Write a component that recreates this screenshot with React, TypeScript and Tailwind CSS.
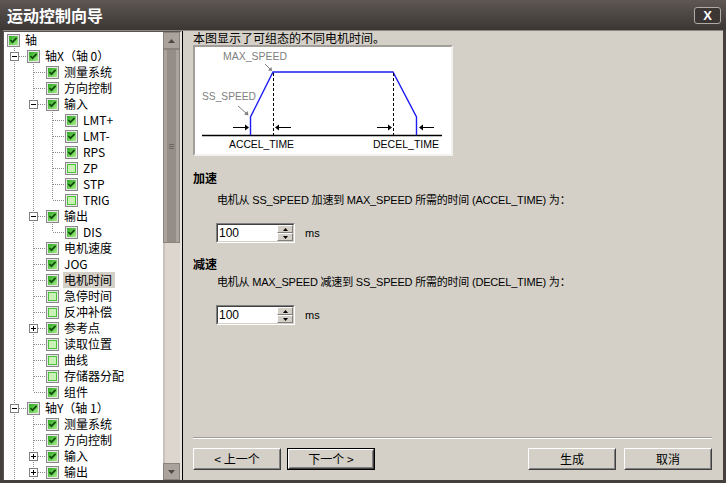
import type { ReactNode } from 'react';

type Row = {
  d: number;
  label: string;
  on: boolean;
  exp?: '-' | '+';
  last?: boolean;
  sel?: boolean;
};

const rows: Row[] = [
  { d: 0, label: '轴', on: true },
  { d: 1, label: '轴X（轴 0）', on: true, exp: '-' },
  { d: 2, label: '测量系统', on: true },
  { d: 2, label: '方向控制', on: true },
  { d: 2, label: '输入', on: true, exp: '-' },
  { d: 3, label: 'LMT+', on: true },
  { d: 3, label: 'LMT-', on: true },
  { d: 3, label: 'RPS', on: true },
  { d: 3, label: 'ZP', on: false },
  { d: 3, label: 'STP', on: true },
  { d: 3, label: 'TRIG', on: false, last: true },
  { d: 2, label: '输出', on: true, exp: '-' },
  { d: 3, label: 'DIS', on: true, last: true },
  { d: 2, label: '电机速度', on: true },
  { d: 2, label: 'JOG', on: true },
  { d: 2, label: '电机时间', on: true, sel: true },
  { d: 2, label: '急停时间', on: false },
  { d: 2, label: '反冲补偿', on: false },
  { d: 2, label: '参考点', on: true, exp: '+' },
  { d: 2, label: '读取位置', on: false },
  { d: 2, label: '曲线', on: false },
  { d: 2, label: '存储器分配', on: false },
  { d: 2, label: '组件', on: true, last: true },
  { d: 1, label: '轴Y（轴 1）', on: true, exp: '-' },
  { d: 2, label: '测量系统', on: true },
  { d: 2, label: '方向控制', on: true },
  { d: 2, label: '输入', on: true, exp: '+' },
  { d: 2, label: '输出', on: true, exp: '+' },
];

const DOT = '#8c8c8c';

const Guide = () => (
  <svg width="19" height="16" className="shrink-0">
    <line x1="10.5" y1="0" x2="10.5" y2="16" stroke={DOT} strokeDasharray="1 1" />
  </svg>
);

const Connector = ({ last, exp }: { last?: boolean; exp?: '-' | '+' }) => (
  <svg width="23" height="16" className="shrink-0">
    <line x1="10.5" y1="0" x2="10.5" y2={last ? 8 : 16} stroke={DOT} strokeDasharray="1 1" />
    <line x1="11" y1="8.5" x2="23" y2="8.5" stroke={DOT} strokeDasharray="1 1" />
    {exp && (
      <g>
        <rect x="6.5" y="4.5" width="8" height="8" fill="white" stroke="#808080" />
        <line x1="8" y1="8.5" x2="13" y2="8.5" stroke="black" />
        {exp === '+' && <line x1="10.5" y1="6" x2="10.5" y2="11" stroke="black" />}
      </g>
    )}
  </svg>
);

const Check = ({ on }: { on: boolean }) => (
  <svg width="13" height="13" className="shrink-0">
    <defs>
      <linearGradient id="chkg" x1="0" y1="0" x2="1" y2="1">
        <stop offset="0" stopColor="#2aa81e" />
        <stop offset="1" stopColor="#a6ee8a" />
      </linearGradient>
    </defs>
    <rect x="0.5" y="0.5" width="12" height="12" fill="#e8e8e8" stroke="#888888" />
    <rect x="2" y="2" width="9" height="9" fill={on ? 'url(#chkg)' : '#48c436'} />
    {on ? (
      <path d="M3.5 6 L5.5 8.2 L9.6 3.8" stroke="#0f4a08" strokeWidth="1.7" fill="none" />
    ) : (
      <rect x="3" y="3" width="7" height="7" fill="#c9f2b6" />
    )}
  </svg>
);

const TreeRow = ({ r }: { r: Row }) => (
  <div className="flex h-4 items-center">
    {r.d === 0 ? (
      <div className="w-[3px] shrink-0" />
    ) : (
      <>
        {Array.from({ length: r.d - 1 }).map((_, i) => (
          <Guide key={i} />
        ))}
        <Connector last={r.last} exp={r.exp} />
      </>
    )}
    <Check on={r.on} />
    <span
      className={`ml-[4px] whitespace-nowrap pl-[1px] pr-[3px] text-[12px] leading-4 text-black ${
        r.sel ? 'bg-[#d4d0c8]' : ''
      }`}
    >
      {r.label}
    </span>
  </div>
);

const Arrow = ({ dir }: { dir: 'up' | 'down' }) => (
  <svg width="7" height="4">
    <path d={dir === 'up' ? 'M0 4 L3.5 0 L7 4 Z' : 'M0 0 L3.5 4 L7 0 Z'} fill="#4e4844" />
  </svg>
);

const ScrollBtn = ({ dir }: { dir: 'up' | 'down' }) => (
  <div className="flex h-[17px] items-center justify-center border border-[#8a827c] bg-[#aaa29c]">
    <Arrow dir={dir} />
  </div>
);

const Scrollbar = () => (
  <div className="flex w-[17px] flex-col bg-[#ddd6cf]">
    <ScrollBtn dir="up" />
    <div className="flex h-[194px] border border-[#8a827c]">
      <div className="w-[3px] bg-[#aba39d]" />
      <div className="flex flex-1 items-center justify-center bg-[#958d87]">
        <div className="flex flex-col gap-[1px]">
          <div className="h-px w-[5px] bg-[#6e6762]" />
          <div className="h-px w-[5px] bg-[#6e6762]" />
          <div className="h-px w-[5px] bg-[#6e6762]" />
        </div>
      </div>
      <div className="w-[3px] bg-[#aba39d]" />
    </div>
    <div className="flex-1 border-l-2 border-[#c9c1bb]" />
    <ScrollBtn dir="down" />
  </div>
);

const Chart = () => (
  <div className="h-[111px] w-[260px] border-2 border-t-[#a29e9a] border-l-[#a29e9a] border-r-[#f3f1ee] border-b-[#f3f1ee] bg-white">
    <svg width="256" height="107" viewBox="2 2 256 107" fontFamily="Liberation Sans, sans-serif">
      <line x1="9" y1="90.5" x2="249" y2="90.5" stroke="black" strokeWidth="1.3" />
      <polyline
        points="57.5,90 57.5,72 80,27 200,27 223.5,72 223.5,90"
        fill="none"
        stroke="#1c1cf5"
        strokeWidth="1.4"
      />
      <line x1="80.5" y1="28" x2="80.5" y2="90" stroke="black" strokeDasharray="3 2" />
      <line x1="200.5" y1="28" x2="200.5" y2="90" stroke="black" strokeDasharray="3 2" />
      <g stroke="black" fill="black">
        <line x1="40" y1="82.5" x2="53" y2="82.5" />
        <path d="M52 79.5 L56 82.5 L52 85.5 Z" stroke="none" />
        <line x1="85" y1="82.5" x2="98" y2="82.5" />
        <path d="M86 79.5 L82 82.5 L86 85.5 Z" stroke="none" />
        <line x1="184" y1="82.5" x2="196" y2="82.5" />
        <path d="M195 79.5 L199 82.5 L195 85.5 Z" stroke="none" />
        <line x1="229" y1="82.5" x2="241" y2="82.5" />
        <path d="M230 79.5 L226 82.5 L230 85.5 Z" stroke="none" />
      </g>
      <g stroke="#808080" fill="#808080">
        <line x1="72" y1="19" x2="77" y2="24" />
        <path d="M75 25.5 L79 26 L78.5 22 Z" stroke="none" />
        <line x1="45" y1="61" x2="53" y2="68" />
        <path d="M51 69.5 L55.5 70.5 L54.5 66 Z" stroke="none" />
      </g>
      <text x="30" y="15" fontSize="11" fill="#808080" textLength="64" lengthAdjust="spacingAndGlyphs">
        MAX_SPEED
      </text>
      <text x="9" y="55" fontSize="11" fill="#808080" textLength="54" lengthAdjust="spacingAndGlyphs">
        SS_SPEED
      </text>
      <text x="36" y="103" fontSize="11" fill="black" textLength="65" lengthAdjust="spacingAndGlyphs">
        ACCEL_TIME
      </text>
      <text x="180" y="103" fontSize="11" fill="black" textLength="66" lengthAdjust="spacingAndGlyphs">
        DECEL_TIME
      </text>
    </svg>
  </div>
);

const SpinBtn = ({ dir }: { dir: 'up' | 'down' }) => (
  <div className="flex h-[8px] items-center justify-center border border-t-white border-l-white border-r-[#808080] border-b-[#808080] bg-[#d4d0c8]">
    <svg width="5" height="3">
      <path d={dir === 'up' ? 'M0 3 L2.5 0 L5 3 Z' : 'M0 0 L2.5 3 L5 0 Z'} fill="black" />
    </svg>
  </div>
);

const Spinner = () => (
  <div className="flex items-center pl-[23px]">
    <div className="flex h-[20px] w-[79px] border border-t-[#808080] border-l-[#808080] border-r-white border-b-white">
      <div className="flex flex-1 border border-t-[#404040] border-l-[#404040] border-r-[#d4d0c8] border-b-[#d4d0c8] bg-white">
        <span className="flex-1 pl-[1px] font-['Liberation_Sans',sans-serif] text-[12px] leading-[16px] text-black">
          100
        </span>
        <div className="flex w-[16px] flex-col">
          <SpinBtn dir="up" />
          <SpinBtn dir="down" />
        </div>
      </div>
    </div>
    <span className="ml-[10px] font-['Liberation_Sans',sans-serif] text-[11px] text-black">ms</span>
  </div>
);

const Btn = ({ children, def }: { children: ReactNode; def?: boolean }) => (
  <button className={`h-[22px] w-[88px] ${def ? 'border border-black' : ''}`}>
    <div className="h-full border border-t-white border-l-white border-r-[#404040] border-b-[#404040] bg-[#d4d0c8]">
      <div className="flex h-full items-center justify-center border border-t-[#d4d0c8] border-l-[#d4d0c8] border-r-[#808080] border-b-[#808080] text-[12px] text-black">
        {children}
      </div>
    </div>
  </button>
);

export default function App() {
  return (
    <div className="flex h-[483px] w-[726px] flex-col bg-[#45403d] font-['Noto_Sans_CJK_SC',sans-serif]">
      <div className="flex h-[30px] items-center justify-between bg-gradient-to-b from-[#5e5754] to-[#3c3734] pl-[7px] pr-[5px]">
        <span className="text-[16px] font-bold leading-none text-white">运动控制向导</span>
        <div className="flex h-[17px] w-[27px] items-center justify-center rounded-[3px] border border-[#b1aba6] bg-[#3b3633] font-['Liberation_Sans',sans-serif] text-[13px] font-bold leading-none text-white">
          X
        </div>
      </div>
      <div className="flex flex-1 px-[3px] pb-[3px]">
        <div className="flex flex-1 border-t border-[#8e8680]">
          <div className="flex w-[179px] border-t border-l border-[#5a5550] border-r-2 border-r-[#e6e2dc]">
            <div className="flex-1 overflow-hidden bg-white">
              {rows.map((r, i) => (
                <TreeRow key={i} r={r} />
              ))}
            </div>
            <Scrollbar />
          </div>
          <div className="flex flex-1 flex-col border-l border-black bg-[#d4d0c8] pl-[10px] pr-[11px] text-black">
            <div className="pt-[1px] text-[12px] leading-[12px]">本图显示了可组态的不同电机时间。</div>
            <div className="mt-[1px]">
              <Chart />
            </div>
            <div className="mt-[14px] text-[12px] font-bold leading-4">加速</div>
            <div className="mt-[6px] pl-[24px] font-['Liberation_Sans','Noto_Sans_CJK_SC',sans-serif] text-[11px] leading-4 tracking-[-0.2px]">
              电机从 SS_SPEED 加速到 MAX_SPEED 所需的时间 (ACCEL_TIME) 为：
            </div>
            <div className="mt-[15px]">
              <Spinner />
            </div>
            <div className="mt-[13px] text-[12px] font-bold leading-4">减速</div>
            <div className="mt-[2px] pl-[24px] font-['Liberation_Sans','Noto_Sans_CJK_SC',sans-serif] text-[11px] leading-4 tracking-[-0.2px]">
              电机从 MAX_SPEED 减速到 SS_SPEED 所需的时间 (DECEL_TIME) 为：
            </div>
            <div className="mt-[15px]">
              <Spinner />
            </div>
            <div className="flex-1" />
            <div className="border-t border-b border-t-[#a19d98] border-b-white" />
            <div className="mt-[9px] flex pb-[10px]">
              <Btn>&lt; 上一个</Btn>
              <div className="w-[6px]" />
              <Btn def>下一个 &gt;</Btn>
              <div className="flex-1" />
              <Btn>生成</Btn>
              <div className="w-[8px]" />
              <Btn>取消</Btn>
            </div>
          </div>
        </div>
      </div>
    </div>
  );
}
